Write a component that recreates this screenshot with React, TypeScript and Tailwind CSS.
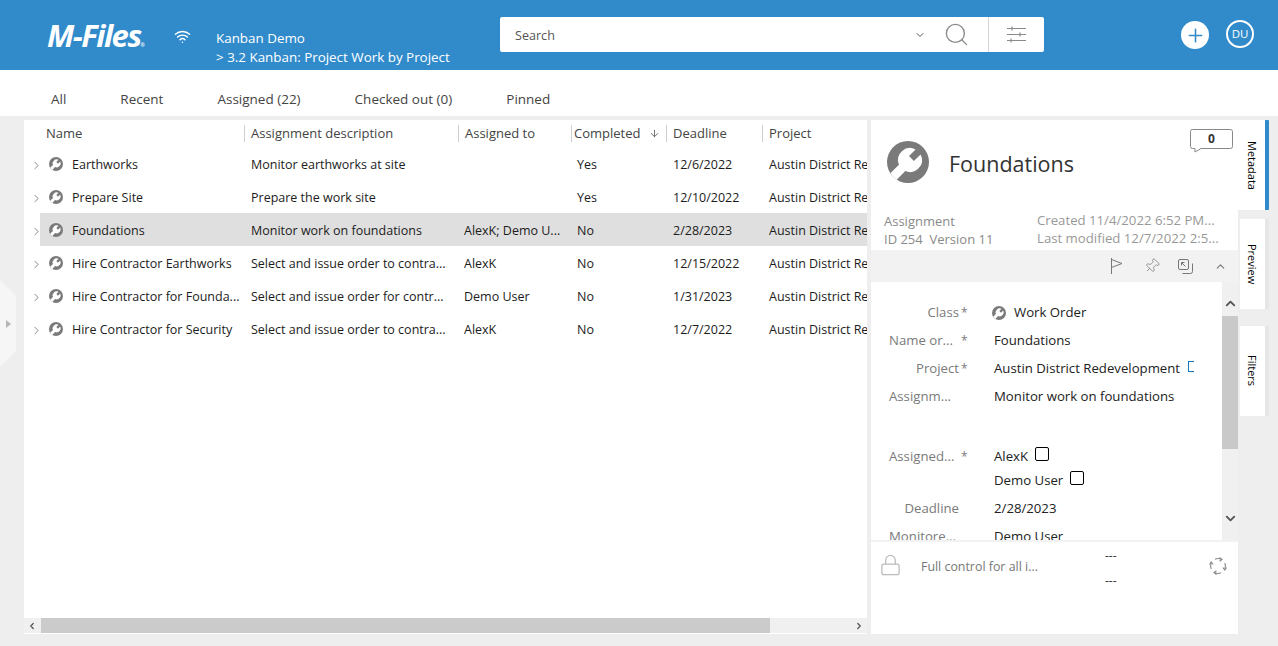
import { ChevronDown, ChevronRight, ChevronUp, Plus, Wifi, Search, ArrowDown, Lock, Pin } from "lucide-react";

const font = { fontFamily: "'Open Sans', sans-serif" };

function WorkIcon({ className }: { className: string }) {
  return (
    <svg className={className} viewBox="0 0 42 42">
      <circle cx="21" cy="21" r="21" fill="#7a7a7a" />
      <path
        d="M28.6 8.4L22 15.1L26.9 20.1L33.6 13.4A12 12 0 0 1 18.31 30.05L9.68 38.68A21 21 0 0 1 3.32 32.32L11.95 23.69A12 12 0 0 1 28.6 8.4Z"
        fill="#fff"
      />
    </svg>
  );
}

const columns = [
  { label: "Name", width: "w-[198px]" },
  { label: "Assignment description", width: "w-[214px]" },
  { label: "Assigned to", width: "w-[113px]" },
  { label: "Completed", width: "w-[95px]" },
  { label: "Deadline", width: "w-[96px]" },
  { label: "Project", width: "w-[104px]" },
];

const rows = [
  ["Earthworks", "Monitor earthworks at site", "", "Yes", "12/6/2022"],
  ["Prepare Site", "Prepare the work site", "", "Yes", "12/10/2022"],
  ["Foundations", "Monitor work on foundations", "AlexK; Demo U...", "No", "2/28/2023"],
  ["Hire Contractor Earthworks", "Select and issue order to contra...", "AlexK", "No", "12/15/2022"],
  ["Hire Contractor for Founda...", "Select and issue order for contr...", "Demo User", "No", "1/31/2023"],
  ["Hire Contractor for Security", "Select and issue order to contra...", "AlexK", "No", "12/7/2022"],
];

function Header() {
  return (
    <header className="h-[70px] bg-[#318bcb] flex items-center text-white shrink-0">
      <div className="ml-[47px] w-[108px] text-[31px] leading-none font-bold italic tracking-[-1.5px] whitespace-nowrap">
        M-Files<span className="text-[5px] align-baseline tracking-normal">®</span>
      </div>
      <Wifi className="ml-[19px] w-[17px] h-[17px] mt-[2px]" strokeWidth={2} />
      <div className="ml-[25px] w-[284px] pt-[26px] text-[13.4px] leading-[19px] whitespace-nowrap">
        <div>Kanban Demo</div>
        <div>&gt; 3.2 Kanban: Project Work by Project</div>
      </div>
      <div className="w-[544px] h-[35px] bg-white rounded-[2px] flex items-center mt-[-1px]">
        <span className="ml-[15px] mt-[3px] text-[12.6px] text-[#555]">Search</span>
        <ChevronDown className="ml-auto w-[12px] h-[12px] text-[#555]" />
        <Search className="ml-[17px] mr-[2px] w-[27px] h-[27px] text-[#8a8a8a]" strokeWidth={1.2} />
        <div className="ml-[16px] w-px h-full bg-[#d5d5d5]" />
        <svg className="ml-[18px] mr-[18px] w-[19px] h-[17px]" viewBox="0 0 19 17" stroke="#8a8a8a" strokeWidth="1.2">
          <path d="M0 2.5h19M0 8.5h19M0 14.5h19M5 0.5v4M13 6.5v4M4 12.5v4" />
        </svg>
      </div>
      <div className="ml-[137px] w-[28px] h-[28px] rounded-full bg-white flex items-center justify-center">
        <Plus className="w-[21px] h-[21px] text-[#318bcb]" strokeWidth={1.8} />
      </div>
      <div className="ml-[17px] w-[28px] h-[28px] rounded-full border-2 border-white flex items-center justify-center text-[11.5px] mt-[-2px]">
        DU
      </div>
    </header>
  );
}

function Tabs() {
  return (
    <nav className="h-[46px] bg-white flex items-center gap-[54px] pl-[51px] pt-[12px] text-[13.5px] text-[#444] shrink-0">
      <span>All</span>
      <span>Recent</span>
      <span>Assigned (22)</span>
      <span>Checked out (0)</span>
      <span>Pinned</span>
    </nav>
  );
}

function ListPanel() {
  return (
    <section className="w-[843px] ml-[24px] bg-white flex flex-col relative overflow-hidden">
      <div className="h-[27px] flex items-center pl-[22px] text-[13px] text-[#444] shrink-0">
        {columns.map((c, i) => (
          <div
            key={c.label}
            className={`${c.width} shrink-0 h-[17px] flex items-center whitespace-nowrap ${i ? "border-l border-[#cfcfcf]" : ""} ${i === 3 ? "pl-[2px]" : i ? "pl-[6px]" : ""}`}
          >
            {c.label}
            {c.label === "Completed" && <ArrowDown className="ml-[9px] w-[11px] h-[11px] text-[#666]" />}
          </div>
        ))}
      </div>
      <div className="flex-1">
        {rows.map((r) => (
          <div key={r[0]} className="h-[33px] pt-[3px] flex items-center text-[12.5px] text-[#1c1c1c] relative">
            {r[0] === "Foundations" && <div className="absolute left-[16px] right-0 inset-y-0 bg-[#dfdfdf]" />}
            <div className="relative w-[227px] shrink-0 flex items-center pl-[6px]">
              <ChevronRight className="w-[13px] h-[13px] text-[#777]" strokeWidth={1.6} />
              <WorkIcon className="ml-[6px] w-[14px] h-[14px] mt-[-3px]" />
              <span className="ml-[9px] whitespace-nowrap">{r[0]}</span>
            </div>
            <div className="relative w-[213px] shrink-0 whitespace-nowrap">{r[1]}</div>
            <div className="relative w-[113px] shrink-0 whitespace-nowrap">{r[2]}</div>
            <div className="relative w-[96px] shrink-0">{r[3]}</div>
            <div className="relative w-[96px] shrink-0">{r[4]}</div>
            <div className="relative whitespace-nowrap">Austin District Redevelopment</div>
          </div>
        ))}
      </div>
      <div className="h-[15px] mb-[1px] bg-[#f0f0f0] flex items-center justify-between shrink-0 relative">
        <ChevronRight className="w-[10px] h-[10px] ml-[3px] text-[#555] rotate-180" strokeWidth={3} />
        <div className="absolute left-[17px] w-[729px] inset-y-0 bg-[#cbcbcb]" />
        <ChevronRight className="w-[10px] h-[10px] mr-[3px] text-[#555]" strokeWidth={3} />
      </div>
    </section>
  );
}

function MetaRow({ label, star, truncated, children, className }: { label: string; star?: boolean; truncated?: boolean; children: React.ReactNode; className: string }) {
  return (
    <div className={`flex items-center text-[13.2px] ${className}`}>
      <div className={`w-[70px] ml-[18px] shrink-0 text-[#7a7a7a] whitespace-nowrap ${truncated ? "text-left" : "text-right"}`}>{label}</div>
      <div className="w-[35px] shrink-0 text-[#7a7a7a] text-[12px] pl-[2px]">{star ? "*" : ""}</div>
      <div className="text-[#222] whitespace-nowrap flex items-center">{children}</div>
    </div>
  );
}

function Box() {
  return <span className="inline-block ml-[7px] mt-[-5px] w-[14px] h-[14px] border border-black rounded-[2px]" />;
}

function RightPanel() {
  return (
    <section className="w-[367px] ml-[4px] bg-white flex flex-col relative">
      <div className="h-[130px] relative shrink-0 flex flex-col">
        <div className="flex items-center pl-[16px] pt-[21px]">
          <WorkIcon className="w-[42px] h-[42px]" />
          <span className="ml-[20px] mt-[5px] text-[21.5px] text-[#333]">Foundations</span>
        </div>
        <div className="absolute right-[5px] top-[9px] w-[43px] h-[24px]">
          <svg className="absolute inset-0" viewBox="0 0 43 24" fill="none" stroke="#888">
            <path d="M2.5.5h38a2 2 0 0 1 2 2v15a2 2 0 0 1-2 2H11l-6 3.5v-3.5H2.5a2 2 0 0 1-2-2v-15a2 2 0 0 1 2-2z" />
          </svg>
          <span className="absolute inset-x-0 top-[1px] text-center text-[12px] font-bold text-[#333]">0</span>
        </div>
        <div className="mt-auto flex justify-between pl-[13px] pr-[19px] pb-[2px] text-[13.2px] leading-[18px] text-[#8a8a8a]">
          <div className="pt-[1px] text-[13px]">
            <div>Assignment</div>
            <div>ID 254&nbsp; Version 11</div>
          </div>
          <div className="w-[182px] text-[#999]">
            <div className="whitespace-nowrap">Created 11/4/2022 6:52 PM...</div>
            <div className="whitespace-nowrap">Last modified 12/7/2022 2:5...</div>
          </div>
        </div>
      </div>
      <div className="h-[32px] bg-[#f2f2f2] flex items-center justify-end pr-[11px] text-[#777] shrink-0">
        <svg className="w-[12px] h-[16px]" viewBox="0 0 12 16" fill="none" stroke="currentColor">
          <path d="M0.5 0v16M0.5 1.5L11 5.5L0.5 9.5" />
        </svg>
        <Pin className="ml-[21px] w-[16px] h-[16px] rotate-45" strokeWidth={1.1} />
        <svg className="ml-[18px] w-[15px] h-[15px]" viewBox="0 0 15 15" fill="none" stroke="currentColor">
          <rect x="0.5" y="0.5" width="10" height="10" rx="1.5" />
          <path d="M4.5 14.5h8a2 2 0 0 0 2-2v-8M3.5 3.5l4 4M3.5 6.5v-3h3" />
        </svg>
        <ChevronUp className="ml-[21px] w-[13px] h-[13px]" />
      </div>
      <div className="h-[258px] flex shrink-0 overflow-hidden">
        <div className="w-[351px] pt-[17px] overflow-hidden">
          <MetaRow label="Class" star className="h-[28px]">
            <WorkIcon className="w-[14px] h-[14px] mr-[8px] ml-[-2px]" />
            Work Order
          </MetaRow>
          <MetaRow label="Name or..." star truncated className="h-[28px]">Foundations</MetaRow>
          <MetaRow label="Project" star className="h-[28px]">
            Austin District Redevelopment
            <span className="ml-[8px] mt-[-5px] w-[6px] h-[11px] border border-r-0 border-[#1b76bd]" />
          </MetaRow>
          <MetaRow label="Assignm..." truncated className="h-[28px] mb-[34px]">Monitor work on foundations</MetaRow>
          <MetaRow label="Assigned..." star truncated className="h-[24px]">AlexK<Box /></MetaRow>
          <MetaRow label="" className="h-[24px]">Demo User<Box /></MetaRow>
          <MetaRow label="Deadline" className="h-[32px]">2/28/2023</MetaRow>
          <MetaRow label="Monitore..." truncated className="h-[24px]">Demo User</MetaRow>
        </div>
        <div className="w-[16px] bg-[#f0f0f0] flex flex-col items-center relative">
          <ChevronUp className="mt-[14px] w-[15px] h-[15px] text-[#555]" strokeWidth={3} />
          <div className="absolute top-[34px] inset-x-0 h-[133px] bg-[#c9c9c9]" />
          <ChevronDown className="absolute top-[229px] w-[15px] h-[15px] text-[#555]" strokeWidth={3} />
        </div>
      </div>
      <div className="h-[2px] bg-[#f2f2f2] shrink-0" />
      <div className="flex-1 flex items-start relative">
        <Lock className="absolute left-[8px] top-[11px] w-[23px] h-[24px] text-[#bbb]" strokeWidth={1.3} />
        <span className="ml-[50px] mt-[16px] text-[12.4px] text-[#777] w-[184px] whitespace-nowrap">Full control for all i...</span>
        <div className="text-[12px] text-[#333] leading-[25px] pt-[1px]">
          <div>---</div>
          <div>---</div>
        </div>
        <svg className="absolute right-[11px] top-[15px] w-[18px] h-[18px]" viewBox="0 0 18 18" fill="none" stroke="#888" strokeWidth="1.1">
          <path d="M6 2.2A7.5 7.5 0 0 1 12 2.2M15.8 6A7.5 7.5 0 0 1 15.8 12M12 15.8A7.5 7.5 0 0 1 6 15.8M2.2 12A7.5 7.5 0 0 1 2.2 6" />
          <path d="M10.5 0.5L13 2.5L10.5 4.2M17.5 10.5L15.8 13L13.8 10.5M7.5 17.5L5 15.5L7.5 13.8M0.5 7.5L2.2 5L4.2 7.5" />
        </svg>
      </div>
    </section>
  );
}

function SideTabs() {
  const tabs = [
    { label: "Metadata", active: true, cls: "h-[90px]" },
    { label: "Preview", active: false, cls: "h-[90px] mt-[9px]" },
    { label: "Filters", active: false, cls: "h-[90px] mt-[17px]" },
  ];
  return (
    <aside className="w-[32px] flex flex-col shrink-0">
      {tabs.map((t) => (
        <div
          key={t.label}
          className={`${t.cls} bg-white flex items-center justify-center border-r-4 rounded-r-[1px] ${t.active ? "w-[31px] pl-[1px] border-[#318bcb]" : "w-[29px] ml-[2px] pr-[2px] border-[#e6e6e6]"}`}
        >
          <span className="text-[11px] text-black [writing-mode:vertical-rl]">{t.label}</span>
        </div>
      ))}
    </aside>
  );
}

export default function App() {
  return (
    <div className="h-[646px] w-[1278px] overflow-hidden bg-[#eeeeee] flex flex-col relative" style={font}>
      <Header />
      <Tabs />
      <main className="h-[514px] mt-[4px] flex">
        <ListPanel />
        <RightPanel />
        <SideTabs />
      </main>
      <div className="absolute left-0 top-[280px] w-[16px] h-[87px] bg-[#f6f6f6] [clip-path:polygon(0_0,100%_18%,100%_82%,0_100%)] flex items-center">
        <span className="ml-[6px] w-0 h-0 border-y-[4px] border-y-transparent border-l-[5px] border-l-[#b5b5b5]" />
      </div>
    </div>
  );
}
